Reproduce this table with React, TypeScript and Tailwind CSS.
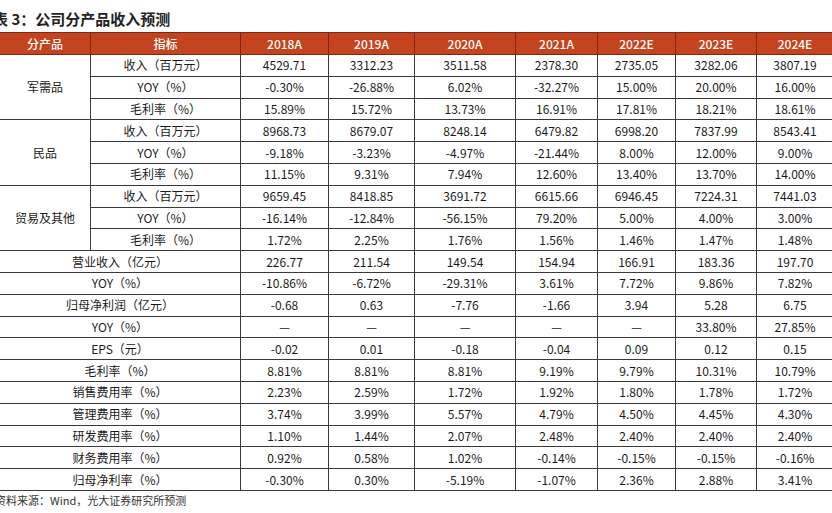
import React from "react";

type Row = { label: string; values: string[] };
type Group = { name: string; rows: Row[] };

const years = ["2018A", "2019A", "2020A", "2021A", "2022E", "2023E", "2024E"];
const colWidths = [90, 150, 88, 86, 101, 82, 78, 81, 77];

const groups: Group[] = [
  {
    name: "军需品",
    rows: [
      { label: "收入（百万元）", values: ["4529.71", "3312.23", "3511.58", "2378.30", "2735.05", "3282.06", "3807.19"] },
      { label: "YOY（%）", values: ["-0.30%", "-26.88%", "6.02%", "-32.27%", "15.00%", "20.00%", "16.00%"] },
      { label: "毛利率（%）", values: ["15.89%", "15.72%", "13.73%", "16.91%", "17.81%", "18.21%", "18.61%"] },
    ],
  },
  {
    name: "民品",
    rows: [
      { label: "收入（百万元）", values: ["8968.73", "8679.07", "8248.14", "6479.82", "6998.20", "7837.99", "8543.41"] },
      { label: "YOY（%）", values: ["-9.18%", "-3.23%", "-4.97%", "-21.44%", "8.00%", "12.00%", "9.00%"] },
      { label: "毛利率（%）", values: ["11.15%", "9.31%", "7.94%", "12.60%", "13.40%", "13.70%", "14.00%"] },
    ],
  },
  {
    name: "贸易及其他",
    rows: [
      { label: "收入（百万元）", values: ["9659.45", "8418.85", "3691.72", "6615.66", "6946.45", "7224.31", "7441.03"] },
      { label: "YOY（%）", values: ["-16.14%", "-12.84%", "-56.15%", "79.20%", "5.00%", "4.00%", "3.00%"] },
      { label: "毛利率（%）", values: ["1.72%", "2.25%", "1.76%", "1.56%", "1.46%", "1.47%", "1.48%"] },
    ],
  },
];

const totals: Row[] = [
  { label: "营业收入（亿元）", values: ["226.77", "211.54", "149.54", "154.94", "166.91", "183.36", "197.70"] },
  { label: "YOY（%）", values: ["-10.86%", "-6.72%", "-29.31%", "3.61%", "7.72%", "9.86%", "7.82%"] },
  { label: "归母净利润（亿元）", values: ["-0.68", "0.63", "-7.76", "-1.66", "3.94", "5.28", "6.75"] },
  { label: "YOY（%）", values: ["—", "—", "—", "—", "—", "33.80%", "27.85%"] },
  { label: "EPS（元）", values: ["-0.02", "0.01", "-0.18", "-0.04", "0.09", "0.12", "0.15"] },
  { label: "毛利率（%）", values: ["8.81%", "8.81%", "8.81%", "9.19%", "9.79%", "10.31%", "10.79%"] },
  { label: "销售费用率（%）", values: ["2.23%", "2.59%", "1.72%", "1.92%", "1.80%", "1.78%", "1.72%"] },
  { label: "管理费用率（%）", values: ["3.74%", "3.99%", "5.57%", "4.79%", "4.50%", "4.45%", "4.30%"] },
  { label: "研发费用率（%）", values: ["1.10%", "1.44%", "2.07%", "2.48%", "2.40%", "2.40%", "2.40%"] },
  { label: "财务费用率（%）", values: ["0.92%", "0.58%", "1.02%", "-0.14%", "-0.15%", "-0.15%", "-0.16%"] },
  { label: "归母净利率（%）", values: ["-0.30%", "0.30%", "-5.19%", "-1.07%", "2.36%", "2.88%", "3.41%"] },
];

const cell = "border border-[#3a3a3a] text-center align-middle p-0 leading-none";

export default function App() {
  return (
    <div
      className="w-[832px] h-[513px] overflow-hidden bg-white text-[#1a1a1a]"
      style={{ fontFamily: '"Noto Sans CJK SC", "Noto Sans", sans-serif' }}
    >
      <div className="-ml-[7px] pt-[9px] h-[32px] text-[15px] font-bold leading-[20px] text-[#222]">
        表 3：公司分产品收入预测
      </div>

      <table className="-ml-px border-collapse table-fixed text-[12px]" style={{ width: 834 }}>
        <colgroup>
          {colWidths.map((w, i) => (
            <col key={i} style={{ width: i === 0 ? w + 1 : w }} />
          ))}
        </colgroup>
        <thead>
          <tr className="h-[22px] bg-[#c3441f] text-white">
            <th className={`${cell} font-medium border-[#7a2a14]`}>分产品</th>
            <th className={`${cell} font-medium border-[#7a2a14]`}>指标</th>
            {years.map((y) => (
              <th key={y} className={`${cell} font-medium border-[#7a2a14]`}>
                {y}
              </th>
            ))}
          </tr>
        </thead>
        <tbody>
          {groups.map((g) =>
            g.rows.map((r, i) => (
              <tr key={g.name + i} className="h-[21.8px]">
                {i === 0 && (
                  <td rowSpan={3} className={cell}>
                    {g.name}
                  </td>
                )}
                <td className={cell}>{r.label}</td>
                {r.values.map((v, j) => (
                  <td key={j} className={cell}>
                    {v}
                  </td>
                ))}
              </tr>
            ))
          )}
          {totals.map((r, i) => (
            <tr key={"t" + i} className="h-[21.8px]">
              <td colSpan={2} className={cell}>
                {r.label}
              </td>
              {r.values.map((v, j) => (
                <td key={j} className={cell}>
                  {v}
                </td>
              ))}
            </tr>
          ))}
        </tbody>
      </table>

      <div className="-ml-[5px] pt-[2px] text-[11px] leading-[14px] text-[#333]">
        资料来源：Wind，光大证券研究所预测
      </div>
    </div>
  );
}
